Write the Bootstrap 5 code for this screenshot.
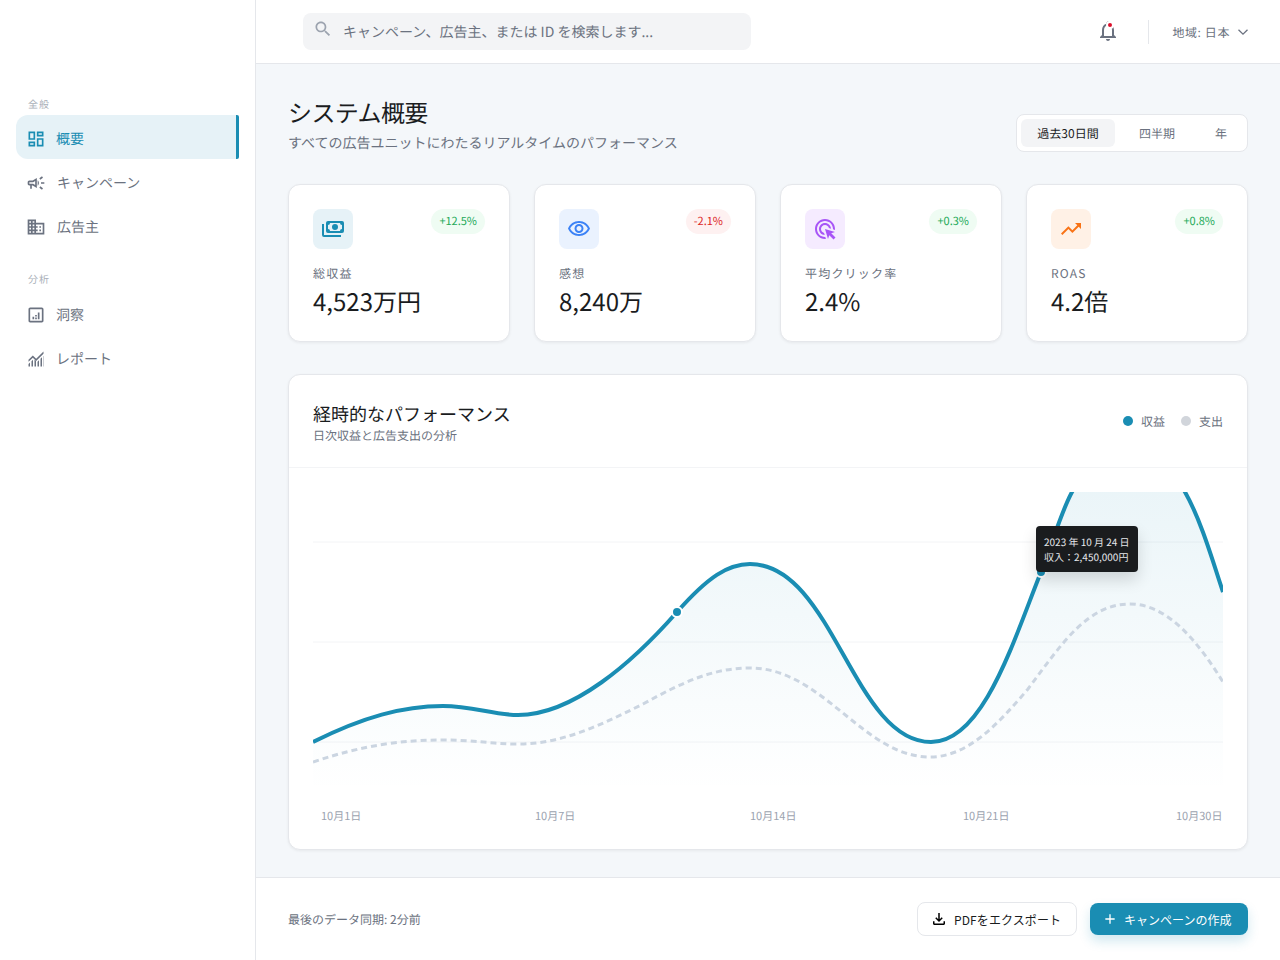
<!DOCTYPE html>
<html lang="ja">
<head>
    <meta charset="UTF-8">
    <meta name="viewport" content="width=device-width, initial-scale=1.0">
    <title>システム概要</title>
    <link href="https://cdn.jsdelivr.net/npm/bootstrap@5.3.0/dist/css/bootstrap.min.css" rel="stylesheet">
    <style>
        html, body { height: 100%; }
        body { font-family: "Noto Sans CJK JP", "Noto Sans", sans-serif; background: #f4f7fa; color: #1a1c1e; overflow: hidden; text-rendering: geometricPrecision; }
        .app-side { width: 256px; height: 960px; background: #fff; border-right: 1px solid #e5e7eb; padding: 96px 16px 0; flex-shrink: 0; }
        .app-col { width: 1024px; height: 960px; }
        .side-label { font-size: 10px; line-height: 16px; letter-spacing: 1px; color: #a9afb8; padding-left: 12px; margin-bottom: 3px; }
        .side-label.second { margin-top: 24px; margin-bottom: 4px; }
        .side-link { height: 44px; display: flex; align-items: center; gap: 10px; padding: 4px 12px 0; font-size: 14px; color: #6b7280; border-radius: 12px; text-decoration: none; }
        .side-link.wide { gap: 11px; }
        .side-link svg { width: 20px; height: 20px; margin-left: -2px; fill: #6b7280; flex-shrink: 0; }
        .side-link.on { background: #e6f2f7; color: #1a8db3; border-right: 3px solid #1a8db3; border-radius: 12px 2px 2px 12px; }
        .side-link.on svg { fill: #1a8db3; }
        .app-head { height: 64px; background: #fff; border-bottom: 1px solid #e5e7eb; padding: 0 32px 0 47px; }
        .search-box { width: 448px; height: 37px; background: #f3f4f6; border-radius: 8px; padding: 0 10px; gap: 10px; font-size: 14px; color: #6b7280; }
        .search-box svg { width: 20px; height: 20px; fill: #9ca3af; margin-top: -6px; }
        .search-box span { padding-top: 2px; }
        .bell-wrap { width: 24px; height: 24px; margin-top: -1px; }
        .bell-wrap svg { width: 24px; height: 24px; fill: #6b7280; display: block; }
        .bell-dot { top: 2px; left: 10px; background: #dc0f2b; border: 2px solid #fff; border-radius: 50%; box-sizing: content-box; width: 4px; height: 4px; }
        .head-sep { width: 1px; height: 24px; background: #e5e7eb; margin: 0 23px 0 28px; }
        .region { font-size: 12px; color: #6b7280; gap: 8px; letter-spacing: .6px; }
        .region span { padding-top: 2px; }
        .region svg { width: 10px; height: 10px; }
        .page-body { padding: 32px 32px 27px; }
        .page-title { font-size: 24px; line-height: 32px; font-weight: 400; letter-spacing: -.6px; margin: 0 0 4px; }
        .page-sub { font-size: 14px; line-height: 18px; padding-top: 2px; color: #6b7280; margin: 0; }
        .range-group { width: 232px; height: 38px; background: #fff; border: 1px solid #e5e7eb; border-radius: 8px; padding: 4px; font-size: 12px; gap: 8px; }
        .range-item { padding: 0 16px; height: 28px; line-height: 30px; color: #6b7280; border-radius: 6px; }
        .range-item.on { background: #f3f4f6; color: #1a1c1e; width: 94px; padding: 0; text-align: center; }
        .stat-row { margin-top: 32px; gap: 24px; }
        .stat-box { flex: 1 1 0; height: 158px; border: 1px solid #e5e7eb; border-radius: 12px; box-shadow: 0 1px 3px rgba(0,0,0,.06); padding: 24px; }
        .stat-icon { width: 40px; height: 40px; border-radius: 8px; }
        .stat-icon svg { width: 24px; height: 24px; }
        .tone-teal { background: #e6f2f7; fill: #1a8db3; }
        .tone-blue { background: #eaf2fe; fill: #3b82f6; }
        .tone-purple { background: #f5ebff; fill: #a855f7; }
        .tone-orange { background: #fff1e6; fill: #f97316; }
        .delta { height: 25px; line-height: 25px; padding: 0 8px; border-radius: 13px; font-size: 11px; }
        .delta.up { background: #effcf3; color: #22a957; }
        .delta.down { background: #fef1f1; color: #dc2626; }
        .stat-label { font-size: 12px; line-height: 14px; padding-top: 2px; letter-spacing: 1.2px; color: #6b7280; margin-top: 16px; }
        .stat-num { font-size: 24px; line-height: 32px; margin-top: 4px; }
        .chart-box { margin-top: 32px; height: 476px; border: 1px solid #e5e7eb; border-radius: 12px; box-shadow: 0 1px 3px rgba(0,0,0,.06); }
        .chart-head { height: 93px; padding: 24px 24px 0; border-bottom: 1px solid #f3f4f6; }
        .chart-title { font-size: 18px; line-height: 26px; padding-top: 2px; font-weight: 400; margin: 0; }
        .chart-sub { font-size: 12px; line-height: 14px; padding-top: 2px; color: #6b7280; margin: 0; }
        .legend { font-size: 12px; color: #6b7280; gap: 16px; margin-top: 12px; }
        .legend-dot { width: 10px; height: 10px; border-radius: 50%; margin-right: 8px; }
        .legend-text { padding-top: 2px; }
        .chart-area { padding: 24px 24px 0; }
        .chart-svg { display: block; width: 910px; height: 300px; overflow: hidden; }
        .chip-tip { top: 58px; left: 747px; width: 102px; height: 46px; background: #1a1c1e; border-radius: 4px; color: #e5e7eb; font-size: 10px; line-height: 15px; padding: 8px; white-space: nowrap; box-shadow: 0 8px 16px rgba(0,0,0,.14); }
        .tick-row { margin-top: 16px; padding-left: 8px; font-size: 11px; line-height: 16px; color: #9ca3af; }
        .tick-row span { flex: 0 0 213px; }
        .tick-row span:nth-child(1) { flex-basis: 214px; }
        .tick-row span:nth-child(2) { flex-basis: 215px; }
        .tick-row span:last-child { flex: 0 0 auto; }
        .app-foot { height: 83px; flex-shrink: 0; background: #fff; border-top: 1px solid #e5e7eb; padding: 0 32px; margin-top: auto; }
        .sync-note { font-size: 12px; color: #6b7280; padding-top: 2px; }
        .foot-btns { gap: 13px; }
        .foot-btns span { padding-top: 2px; white-space: nowrap; }
        .btn-pdf { width: 160px; height: 34px; padding: 0 0 0 12px; border: 1px solid #e5e7eb; border-radius: 8px; background: #fff; color: #1a1c1e; font-size: 12px; gap: 6px; letter-spacing: .1px; }
        .btn-pdf svg { width: 18px; height: 18px; }
        .btn-new { width: 158px; height: 32px; padding: 0 0 0 12px; border: 0; border-radius: 8px; background: #1a8db3; color: #fff; font-size: 12px; gap: 6px; box-shadow: 0 6px 12px rgba(26,141,179,.2); }
        .btn-new svg { width: 16px; height: 16px; fill: #fff; }
    </style>
</head>
<body>
<div class="d-flex">
    <aside class="app-side">
        <div class="side-label">全般</div>
        <a class="side-link on" href="#"><svg viewBox="0 0 24 24"><path d="M19 5v2h-4V5h4M9 5v6H5V5h4m10 8v6h-4v-6h4M9 17v2H5v-2h4M21 3h-8v6h8V3zM11 3H3v10h8V3zm10 8h-8v10h8V11zm-10 4H3v6h8v-6z"/></svg>概要</a>
        <a class="side-link wide" href="#"><svg viewBox="0 0 24 24"><path d="M18 11v2h4v-2h-4zm-2 6.61c.96.71 2.21 1.65 3.2 2.39.4-.53.8-1.07 1.2-1.6-.99-.74-2.24-1.68-3.2-2.4-.4.54-.8 1.08-1.2 1.61zM20.4 5.6c-.4-.53-.8-1.07-1.2-1.6-.99.74-2.24 1.68-3.2 2.4.4.53.8 1.07 1.2 1.6.96-.72 2.21-1.65 3.2-2.4zM4 9c-1.1 0-2 .9-2 2v2c0 1.1.9 2 2 2h1v4h2v-4h1l5 3V6L8 9H4zm5.03 1.71L11 9.53v4.94l-1.97-1.18-.48-.29H4v-2h4.55l.48-.29zM15.5 12c0-1.33-.58-2.53-1.5-3.35v6.69c.92-.81 1.5-2.01 1.5-3.34z"/></svg>キャンペーン</a>
        <a class="side-link wide" href="#"><svg viewBox="0 0 24 24"><path d="M12 7V3H2v18h20V7H12zM6 19H4v-2h2v2zm0-4H4v-2h2v2zm0-4H4V9h2v2zm0-4H4V5h2v2zm4 12H8v-2h2v2zm0-4H8v-2h2v2zm0-4H8V9h2v2zm0-4H8V5h2v2zm10 12h-8v-2h2v-2h-2v-2h2v-2h-2V9h8v10zm-2-8h-2v2h2v-2zm0 4h-2v2h2v-2z"/></svg>広告主</a>
        <div class="side-label second">分析</div>
        <a class="side-link" href="#"><svg viewBox="0 0 24 24"><path d="M19 3H5c-1.1 0-2 .9-2 2v14c0 1.1.9 2 2 2h14c1.1 0 2-.9 2-2V5c0-1.1-.9-2-2-2zm0 16H5V5h14v14zM7.8 14h2v3h-2zM11 12h2v1.8h-2zM11 15h2v2h-2zM14.2 9h2v8h-2z"/></svg>洞察</a>
        <a class="side-link" href="#"><svg viewBox="0 0 24 24"><path d="M3 21v-3l1.8-1.8V21zM6.6 21v-6.4l1.8-1.8V21zM10.2 21v-8.2l1.8 1.6V21zM13.8 21v-5.6l1.8-1.8V21zM17.4 21v-9.2l1.8-1.8V21zM20.6 21V8.8l.4-.4V21zM3 15.4V13l5.2-5.2 4 4L21 3v2.6l-8.8 8.8-4-4z"/></svg>レポート</a>
    </aside>

    <div class="app-col d-flex flex-column">
        <header class="app-head d-flex align-items-center">
            <div class="search-box d-flex align-items-center"><svg viewBox="0 0 24 24"><path d="M15.5 14h-.79l-.28-.27C15.41 12.59 16 11.11 16 9.5 16 5.91 13.09 3 9.5 3S3 5.91 3 9.5 5.91 16 9.5 16c1.61 0 3.09-.59 4.23-1.57l.27.28v.79l5 4.99L20.49 19l-4.99-5zm-6 0C7.01 14 5 11.99 5 9.5S7.01 5 9.5 5 14 7.01 14 9.5 11.99 14 9.5 14z"/></svg><span>キャンペーン、広告主、または ID を検索します...</span></div>
            <div class="ms-auto d-flex align-items-center">
                <div class="bell-wrap position-relative">
                    <svg viewBox="0 0 24 24"><path d="M12 22c1.1 0 2-.9 2-2h-4c0 1.1.9 2 2 2zm6-6v-5c0-3.07-1.63-5.64-4.5-6.32V4c0-.83-.67-1.5-1.5-1.5s-1.5.67-1.5 1.5v.68C7.64 5.36 6 7.92 6 11v5l-2 2v1h16v-1l-2-2zm-2 1H8v-6c0-2.48 1.51-4.5 4-4.5s4 2.02 4 4.5v6z"/></svg>
                    <span class="bell-dot position-absolute"></span>
                </div>
                <div class="head-sep"></div>
                <div class="region d-flex align-items-center"><span>地域: 日本</span><svg viewBox="0 0 10 10" fill="none" stroke="#6b7280" stroke-width="1.3"><path d="M.5 2.8 5 7.2l4.5-4.4"/></svg></div>
            </div>
        </header>

        <main class="page-body flex-grow-1">
            <div class="d-flex justify-content-between align-items-end">
                <div>
                    <h1 class="page-title">システム概要</h1>
                    <p class="page-sub">すべての広告ユニットにわたるリアルタイムのパフォーマンス</p>
                </div>
                <div class="range-group d-flex">
                    <div class="range-item on">過去30日間</div>
                    <div class="range-item">四半期</div>
                    <div class="range-item">年</div>
                </div>
            </div>

            <div class="stat-row d-flex">
                <div class="card stat-box">
                    <div class="d-flex justify-content-between align-items-start">
                        <div class="stat-icon tone-teal d-flex align-items-center justify-content-center"><svg viewBox="0 0 24 24"><path fill-rule="evenodd" d="M7 4h14a2 2 0 0 1 2 2v8a2 2 0 0 1-2 2H7a2 2 0 0 1-2-2V6a2 2 0 0 1 2-2zM9 6h10a2 2 0 0 0 2 2v4a2 2 0 0 0-2 2H9a2 2 0 0 0-2-2V8a2 2 0 0 0 2-2zM14 7a3 3 0 1 0 0 6 3 3 0 0 0 0-6z"/><path d="M1 7h2v11h17v2H3a2 2 0 0 1-2-2z"/></svg></div>
                        <span class="delta up">+12.5%</span>
                    </div>
                    <div class="stat-label">総収益</div>
                    <div class="stat-num">4,523万円</div>
                </div>
                <div class="card stat-box">
                    <div class="d-flex justify-content-between align-items-start">
                        <div class="stat-icon tone-blue d-flex align-items-center justify-content-center"><svg viewBox="0 0 24 24"><path d="M12 6c3.79 0 7.17 2.13 8.82 5.5C19.17 14.87 15.79 17 12 17s-7.17-2.13-8.82-5.5C4.83 8.13 8.21 6 12 6m0-2C7 4 2.73 7.11 1 11.5 2.73 15.89 7 19 12 19s9.27-3.11 11-7.5C21.27 7.11 17 4 12 4zm0 5c1.38 0 2.5 1.12 2.5 2.5S13.38 14 12 14s-2.5-1.12-2.5-2.5S10.62 9 12 9m0-2c-2.48 0-4.5 2.02-4.5 4.5S9.52 16 12 16s4.5-2.02 4.5-4.5S14.48 7 12 7z"/></svg></div>
                        <span class="delta down">-2.1%</span>
                    </div>
                    <div class="stat-label">感想</div>
                    <div class="stat-num">8,240万</div>
                </div>
                <div class="card stat-box">
                    <div class="d-flex justify-content-between align-items-start">
                        <div class="stat-icon tone-purple d-flex align-items-center justify-content-center"><svg viewBox="0 0 24 24"><path d="M11.71 17.99C8.53 17.84 6 15.22 6 12c0-3.31 2.69-6 6-6 3.22 0 5.84 2.53 5.99 5.71l-2.1-.63C15.48 9.31 13.89 8 12 8c-2.21 0-4 1.79-4 4 0 1.89 1.31 3.48 3.08 3.89l.63 2.1zM22 12c0 .3-.01.6-.04.9l-1.97-.59c.01-.1.01-.21.01-.31 0-4.42-3.58-8-8-8s-8 3.58-8 8 3.58 8 8 8c.1 0 .21 0 .31-.01l.59 1.97c-.3.03-.6.04-.9.04-5.52 0-10-4.48-10-10S6.48 2 12 2s10 4.48 10 10zm-3.77 4.26L22 15l-10-3 3 10 1.26-3.77 4.27 4.27 1.97-1.97-4.27-4.27z"/></svg></div>
                        <span class="delta up">+0.3%</span>
                    </div>
                    <div class="stat-label">平均クリック率</div>
                    <div class="stat-num">2.4%</div>
                </div>
                <div class="card stat-box">
                    <div class="d-flex justify-content-between align-items-start">
                        <div class="stat-icon tone-orange d-flex align-items-center justify-content-center"><svg viewBox="0 0 24 24"><path d="M16 6l2.29 2.29-4.88 4.88-4-4L2 16.59 3.41 18l6-6 4 4 6.3-6.29L22 12V6z"/></svg></div>
                        <span class="delta up">+0.8%</span>
                    </div>
                    <div class="stat-label">ROAS</div>
                    <div class="stat-num">4.2倍</div>
                </div>
            </div>

            <div class="card chart-box">
                <div class="chart-head d-flex justify-content-between align-items-start">
                    <div>
                        <h2 class="chart-title">経時的なパフォーマンス</h2>
                        <p class="chart-sub">日次収益と広告支出の分析</p>
                    </div>
                    <div class="legend d-flex align-items-center">
                        <span class="d-flex align-items-center"><span class="legend-dot" style="background:#1a8db3"></span><span class="legend-text">収益</span></span>
                        <span class="d-flex align-items-center"><span class="legend-dot" style="background:#d1d5db"></span><span class="legend-text">支出</span></span>
                    </div>
                </div>
                <div class="chart-area position-relative">
                    <svg class="chart-svg" viewBox="0 0 910 300">
                        <defs>
                            <linearGradient id="fillRev" x1="0" y1="0" x2="0" y2="1">
                                <stop offset="0" stop-color="#1a8db3" stop-opacity=".1"/>
                                <stop offset="1" stop-color="#1a8db3" stop-opacity="0"/>
                            </linearGradient>
                        </defs>
                        <g stroke="#f3f4f6" stroke-width="1">
                            <line x1="0" y1="50" x2="910" y2="50"/>
                            <line x1="0" y1="150" x2="910" y2="150"/>
                            <line x1="0" y1="250" x2="910" y2="250"/>
                        </g>
                        <path fill="url(#fillRev)" d="M0,250 C50,225 90,214 130,214 C160,214 180,223 205,223 C260,223 320,170 364,120 C395,85 415,72 437,72 C520,72 540,250 618,250 C670,250 700,150 728,80 C740,50 748,20 759,0 C775,-30 790,-40 815,-40 C840,-40 860,-22 872,0 C888,28 900,70 910,100 V300 H0 Z"/>
                        <path fill="none" stroke="#cbd5e1" stroke-width="3" stroke-dasharray="6 4" d="M0,270 C50,253 90,248 130,248 C160,248 180,252 205,252 C250,252 290,232 330,212 C370,190 400,176 437,176 C510,176 550,265 617,265 C655,265 685,232 715,197 C750,150 775,112 817,112 C855,112 885,150 910,190"/>
                        <path fill="none" stroke="#1a8db3" stroke-width="4" d="M0,250 C50,225 90,214 130,214 C160,214 180,223 205,223 C260,223 320,170 364,120 C395,85 415,72 437,72 C520,72 540,250 618,250 C670,250 700,150 728,80 C740,50 748,20 759,0 C775,-30 790,-40 815,-40 C840,-40 860,-22 872,0 C888,28 900,70 910,100"/>
                        <circle cx="364" cy="120" r="5" fill="#1a8db3" stroke="#fff" stroke-width="2"/>
                        <circle cx="728" cy="80" r="5" fill="#1a8db3" stroke="#fff" stroke-width="2"/>
                    </svg>
                    <div class="chip-tip position-absolute">2023 年 10 月 24 日<br>収入：2,450,000円</div>
                    <div class="tick-row d-flex">
                        <span>10月1日</span><span>10月7日</span><span>10月14日</span><span>10月21日</span><span>10月30日</span>
                    </div>
                </div>
            </div>
        </main>

        <footer class="app-foot d-flex align-items-center justify-content-between">
            <span class="sync-note">最後のデータ同期: 2分前</span>
            <div class="foot-btns d-flex align-items-center">
                <button class="btn btn-pdf d-flex align-items-center" type="button"><svg viewBox="0 0 24 24"><path d="M18 15v3H6v-3H4v3c0 1.1.9 2 2 2h12c1.1 0 2-.9 2-2v-3h-2zm-1-4l-1.41-1.41L13 12.17V4h-2v8.17L8.41 9.59 7 11l5 5 5-5z"/></svg><span>PDFをエクスポート</span></button>
                <button class="btn btn-new d-flex align-items-center" type="button"><svg viewBox="0 0 24 24"><path d="M19 13h-6v6h-2v-6H5v-2h6V5h2v6h6v2z"/></svg><span>キャンペーンの作成</span></button>
            </div>
        </footer>
    </div>
</div>
</body>
</html>
